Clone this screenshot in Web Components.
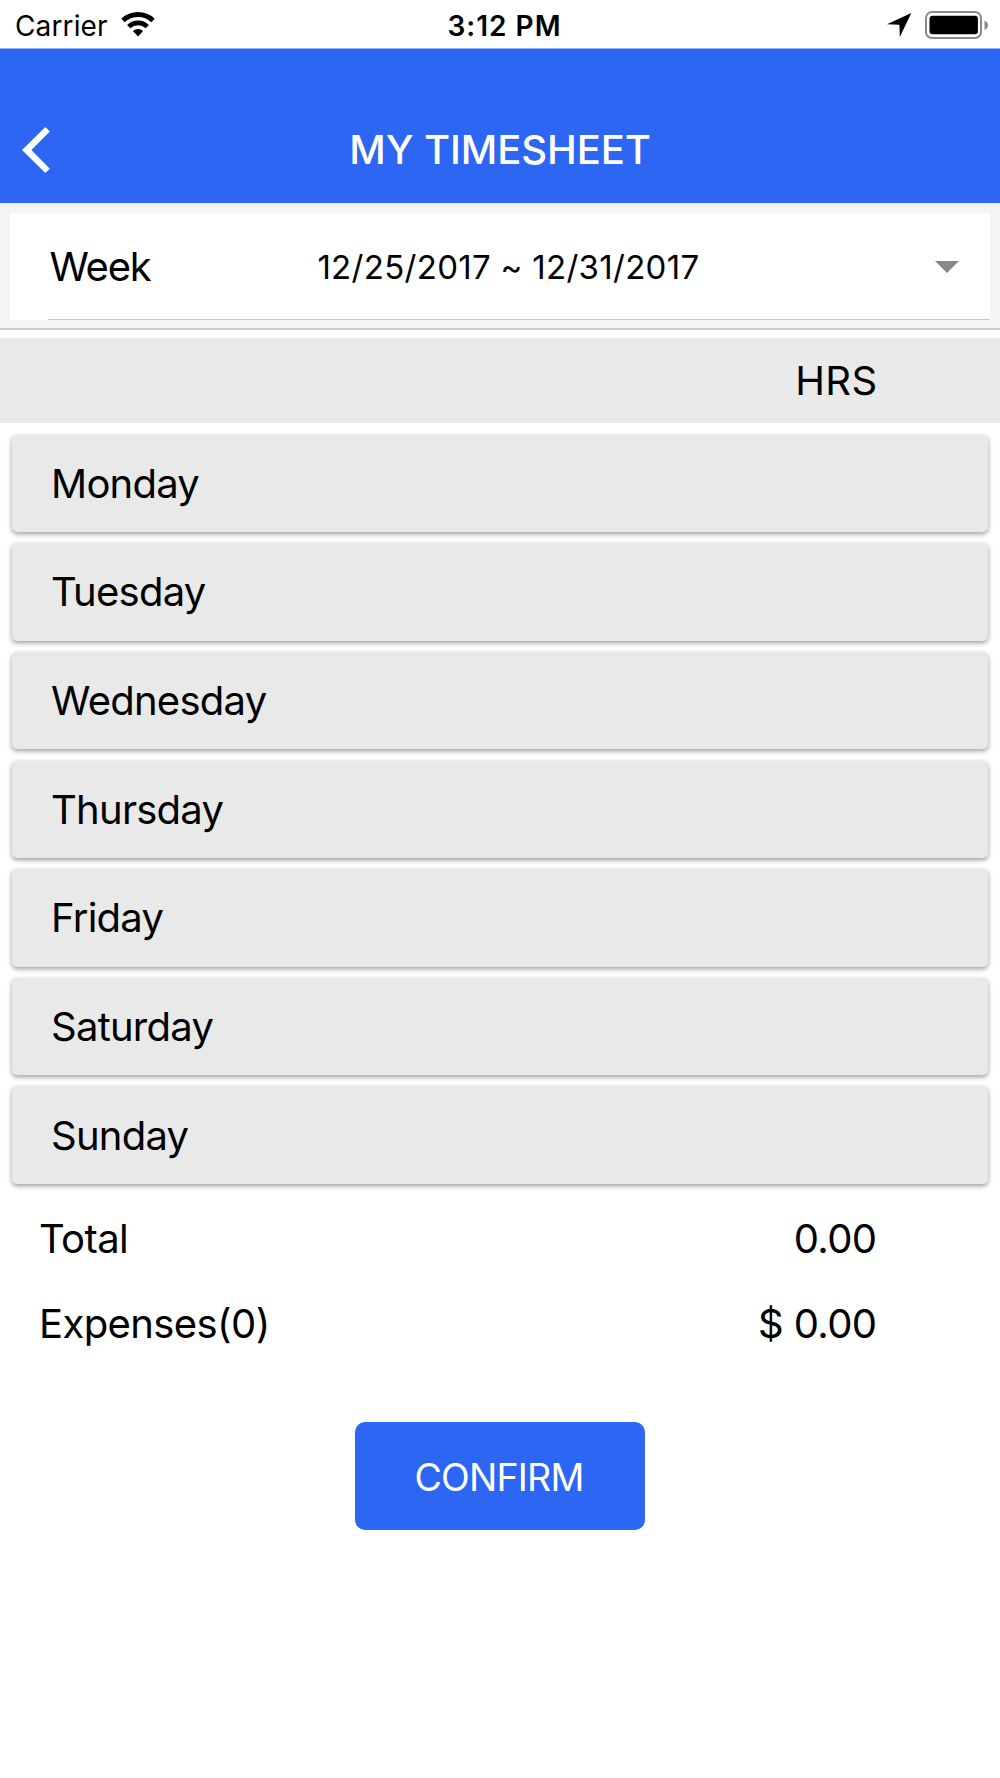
<!DOCTYPE html>
<html lang="en">
<head>
<meta charset="utf-8">
<title>My Timesheet</title>
<style>
  body {
    margin: 0;
    background: #fff;
    color: #000;
    font: 400 40px/1 Inter, "Liberation Sans", sans-serif;
  }
</style>
</head>
<body>
<timesheet-page></timesheet-page>

<script>
class StatusBar extends HTMLElement {
  connectedCallback() {
    this.attachShadow({ mode: 'open' });
    this.shadowRoot.innerHTML = `
      <style>
        :host {
          display: grid;
          grid-template-columns: 1fr auto 1fr;
          align-items: center;
          box-sizing: border-box;
          height: 48px;
          padding: 3px 11px 0 15px;
          font-size: 28px;
        }
        .left, .right { display: flex; align-items: center; }
        .left { gap: 13.3px; letter-spacing: 0.13px; }
        .right { justify-content: flex-end; gap: 13.4px; }
        .time { padding-left: 5px; font-weight: 600; letter-spacing: 1px; }
        svg { display: block; }
      </style>
      <div class="left">
        <span class="carrier"><slot name="carrier"></slot></span>
        <svg width="34" height="27" viewBox="0 0 34 27">
          <g fill="none" stroke="#000">
            <path d="M2 8.5A21.9 21.9 0 0 1 32 8.5" stroke-width="5"/>
            <path d="M7.7 14.6A13.6 13.6 0 0 1 26.3 14.6" stroke-width="4.7"/>
          </g>
          <path d="M11.9 19A7.5 7.5 0 0 1 22.1 19L17 24.5Z"/>
        </svg>
      </div>
      <span class="time"><slot name="time"></slot></span>
      <div class="right">
        <svg width="25" height="25" viewBox="0 0 25 25">
          <path d="M24.3 0L12.8 24L12.4 11.8L0 11.2Z"/>
        </svg>
        <svg width="64" height="30" viewBox="0 0 64 30">
          <rect x="1" y="1" width="55" height="26" rx="6" fill="none" stroke="#8a8a8a" stroke-width="2"/>
          <rect x="4.5" y="4.7" width="48.4" height="18.6" rx="3"/>
          <path d="M59.5 9.4Q63 11 63 14.2T59.5 19Z" fill="#8a8a8a"/>
        </svg>
      </div>
    `;
  }
}
customElements.define('status-bar', StatusBar);

class NavHeader extends HTMLElement {
  connectedCallback() {
    this.attachShadow({ mode: 'open' });
    this.shadowRoot.innerHTML = `
      <style>
        :host {
          display: grid;
          grid-template-columns: 1fr auto 1fr;
          align-items: center;
          box-sizing: border-box;
          height: 155px;
          padding: 48px 22px 0;
          border-top: 1px solid #96b3f9;
          background: #2c66f3;
          color: #fff;
        }
        h1 { margin: 0; font-size: 40px; font-weight: 550; letter-spacing: -0.1px; }
        button { justify-self: start; padding: 0; border: 0; background: none; }
        svg { display: block; }
      </style>
      <button aria-label="Back">
        <svg width="28" height="46" viewBox="0 0 28 46">
          <path d="M23.3 0L27.8 4.4L9.4 23L27.8 41.8L23.3 46L0 23Z" fill="#fff"/>
        </svg>
      </button>
      <h1><slot></slot></h1>
    `;
  }
}
customElements.define('nav-header', NavHeader);

class WeekPicker extends HTMLElement {
  connectedCallback() {
    this.attachShadow({ mode: 'open' });
    this.shadowRoot.innerHTML = `
      <style>
        :host {
          display: block;
          padding: 10px 10px 8px;
          background: #f5f5f5;
          border-bottom: 2px solid #cbcbcb;
        }
        .item { padding-left: 38.4px; background: #fff; }
        .inner {
          display: flex;
          align-items: center;
          box-sizing: border-box;
          height: 107px;
          padding: 2px 31.5px 0 0;
          border-bottom: 1px solid #c8c7cc;
        }
        .label { flex: 0 0 268px; padding-left: 1px; letter-spacing: -1.2px; }
        .value { flex: 1; font-size: 33px; letter-spacing: 0.3px; }
        svg { display: block; }
      </style>
      <div class="item">
        <div class="inner">
          <span class="label"><slot name="label"></slot></span>
          <span class="value"><slot name="value"></slot></span>
          <svg width="24" height="12" viewBox="0 0 24 12"><path d="M0 0H24L12 12Z" fill="#888"/></svg>
        </div>
      </div>
    `;
  }
}
customElements.define('week-picker', WeekPicker);

class DayCard extends HTMLElement {
  connectedCallback() {
    this.attachShadow({ mode: 'open' });
    this.shadowRoot.innerHTML = `
      <style>
        :host {
          display: flex;
          align-items: center;
          box-sizing: border-box;
          height: 97.4px;
          padding: 1px 0 0 39px;
          border-radius: 5px;
          background: #e9e9e9;
          box-shadow: 0 2px 5px rgba(0, 0, 0, 0.4);
          letter-spacing: -0.75px;
        }
      </style>
      <span><slot></slot></span>
    `;
  }
}
customElements.define('day-card', DayCard);

class SummaryRow extends HTMLElement {
  connectedCallback() {
    this.attachShadow({ mode: 'open' });
    this.shadowRoot.innerHTML = `
      <style>
        :host {
          display: flex;
          align-items: center;
          justify-content: space-between;
          box-sizing: border-box;
          height: 84.6px;
          padding: 2px 123.5px 0 39px;
          letter-spacing: -0.6px;
        }
        :host([header]) { background: #e9e9e9; letter-spacing: 0.4px; padding-right: 122.5px; }
      </style>
      <span><slot></slot></span>
      <span><slot name="value"></slot></span>
    `;
  }
}
customElements.define('summary-row', SummaryRow);

class ConfirmButton extends HTMLElement {
  connectedCallback() {
    this.attachShadow({ mode: 'open' });
    this.shadowRoot.innerHTML = `
      <style>
        :host { display: flex; justify-content: center; }
        button {
          width: 290px;
          height: 108px;
          padding: 3px 2px 0 0;
          border: 0;
          border-radius: 10px;
          background: #2c66f3;
          color: #fff;
          font: inherit;
          font-size: 37.5px;
          letter-spacing: -0.8px;
        }
      </style>
      <button><slot></slot></button>
    `;
  }
}
customElements.define('confirm-button', ConfirmButton);

class TimesheetPage extends HTMLElement {
  connectedCallback() {
    const days = ['Monday', 'Tuesday', 'Wednesday', 'Thursday', 'Friday', 'Saturday', 'Sunday'];
    this.attachShadow({ mode: 'open' });
    this.shadowRoot.innerHTML = `
      <style>
        :host { display: block; height: 1778px; overflow: hidden; }
        .head { margin-top: 8px; }
        .days {
          display: grid;
          gap: 11.25px;
          padding: 12px;
        }
        confirm-button { margin-top: 57px; }
      </style>
      <status-bar>
        <span slot="carrier">Carrier</span>
        <span slot="time">3:12 PM</span>
      </status-bar>
      <nav-header>MY TIMESHEET</nav-header>
      <week-picker>
        <span slot="label">Week</span>
        <span slot="value">12/25/2017 ~ 12/31/2017</span>
      </week-picker>
      <summary-row class="head" header><span slot="value">HRS</span></summary-row>
      <div class="days">
        ${days.map(day => `<day-card>${day}</day-card>`).join('')}
      </div>
      <summary-row>Total<span slot="value">0.00</span></summary-row>
      <summary-row>Expenses(0)<span slot="value">$ 0.00</span></summary-row>
      <confirm-button>CONFIRM</confirm-button>
    `;
  }
}
customElements.define('timesheet-page', TimesheetPage);
</script>
</body>
</html>
